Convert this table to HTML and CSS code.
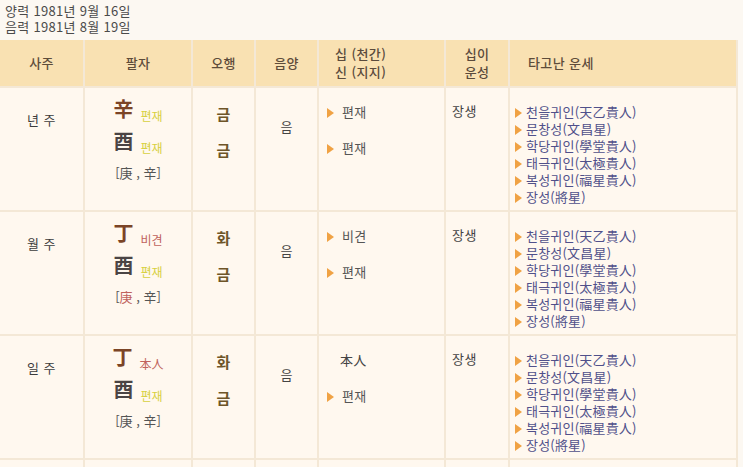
FILE: index.html
```html
<!DOCTYPE html>
<html lang="ko">
<head>
<meta charset="utf-8">
<link rel="stylesheet" href="styles.css">
</head>
<body>
<div class="dates">
  <div>양력 1981년 9월 16일</div>
  <div>음력 1981년 8월 19일</div>
</div>
<div class="saju">
  <div class="th">사주</div>
  <div class="th">팔자</div>
  <div class="th">오행</div>
  <div class="th">음양</div>
  <div class="th th-left th-two"><span>십 (천간)</span><span>신 (지지)</span></div>
  <div class="th th-two"><span>십이</span><span>운성</span></div>
  <div class="th th-left th-wide">타고난 운세</div>

  <!-- 년주 -->
  <div class="td c-name">년 주</div>
  <div class="td c-pal">
    <div class="pal-line"><span class="big red">辛</span><span class="sub yel">편재</span></div>
    <div class="pal-line"><span class="big dark">酉</span><span class="sub yel">편재</span></div>
    <div class="pal-line"><span class="hid">[庚 , 辛]</span></div>
  </div>
  <div class="td c-oh"><div>금</div><div>금</div></div>
  <div class="td c-yy">음</div>
  <div class="td c-sip">
    <div><i class="tri"></i>편재</div>
    <div><i class="tri"></i>편재</div>
  </div>
  <div class="td c-un">장생</div>
  <div class="td c-list">
    <div><i class="tri sm"></i>천을귀인(天乙貴人)</div>
    <div><i class="tri sm"></i>문창성(文昌星)</div>
    <div><i class="tri sm"></i>학당귀인(學堂貴人)</div>
    <div><i class="tri sm"></i>태극귀인(太極貴人)</div>
    <div><i class="tri sm"></i>복성귀인(福星貴人)</div>
    <div><i class="tri sm"></i>장성(將星)</div>
  </div>

  <!-- 월주 -->
  <div class="td c-name">월 주</div>
  <div class="td c-pal">
    <div class="pal-line"><span class="big red">丁</span><span class="sub rose">비견</span></div>
    <div class="pal-line"><span class="big dark">酉</span><span class="sub yel">편재</span></div>
    <div class="pal-line"><span class="hid">[<span class="rose">庚</span> , 辛]</span></div>
  </div>
  <div class="td c-oh"><div>화</div><div>금</div></div>
  <div class="td c-yy">음</div>
  <div class="td c-sip">
    <div><i class="tri"></i>비견</div>
    <div><i class="tri"></i>편재</div>
  </div>
  <div class="td c-un">장생</div>
  <div class="td c-list">
    <div><i class="tri sm"></i>천을귀인(天乙貴人)</div>
    <div><i class="tri sm"></i>문창성(文昌星)</div>
    <div><i class="tri sm"></i>학당귀인(學堂貴人)</div>
    <div><i class="tri sm"></i>태극귀인(太極貴人)</div>
    <div><i class="tri sm"></i>복성귀인(福星貴人)</div>
    <div><i class="tri sm"></i>장성(將星)</div>
  </div>

  <!-- 일주 -->
  <div class="td c-name">일 주</div>
  <div class="td c-pal">
    <div class="pal-line"><span class="big red">丁</span><span class="sub rose">本人</span></div>
    <div class="pal-line"><span class="big dark">酉</span><span class="sub yel">편재</span></div>
    <div class="pal-line"><span class="hid">[庚 , 辛]</span></div>
  </div>
  <div class="td c-oh"><div>화</div><div>금</div></div>
  <div class="td c-yy">음</div>
  <div class="td c-sip">
    <div class="self">本人</div>
    <div><i class="tri"></i>편재</div>
  </div>
  <div class="td c-un">장생</div>
  <div class="td c-list">
    <div><i class="tri sm"></i>천을귀인(天乙貴人)</div>
    <div><i class="tri sm"></i>문창성(文昌星)</div>
    <div><i class="tri sm"></i>학당귀인(學堂貴人)</div>
    <div><i class="tri sm"></i>태극귀인(太極貴人)</div>
    <div><i class="tri sm"></i>복성귀인(福星貴人)</div>
    <div><i class="tri sm"></i>장성(將星)</div>
  </div>

  <!-- 다음 행 -->
  <div class="td"></div>
  <div class="td"></div>
  <div class="td"></div>
  <div class="td"></div>
  <div class="td"></div>
  <div class="td"></div>
  <div class="td"></div>
</div>
</body>
</html>
```

FILE: styles.css
```css
html, body {
  margin: 0;
  padding: 0;
  background: #fcf8f2;
  overflow: hidden;
}
body {
  font-family: "Noto Sans CJK KR", "Noto Sans", sans-serif;
  font-size: 13px;
  color: #444;
}
.dates {
  padding: 3px 0 0 5px;
  line-height: 16px;
  color: #4a4a4a;
  letter-spacing: 0.3px;
}
.saju {
  margin-top: 5px;
  width: 738px;
  display: grid;
  grid-template-columns: 83px 106px 61px 61px 125px 62px 226px;
  grid-template-rows: 46px 122px 122px 122px 122px;
  column-gap: 2px;
  row-gap: 2px;
  background: #f4e8d6;
}
.th {
  background: #f9e1b2;
  color: #5e4c3a;
  font-weight: 500;
  display: flex;
  align-items: center;
  justify-content: center;
  line-height: 18px;
  letter-spacing: 0.4px;
}
.th-two {
  flex-direction: column;
  color: #5a4a3c;
}
.th-left {
  justify-content: flex-start;
  align-items: flex-start;
  padding-left: 16px;
}
.th-two.th-left {
  justify-content: center;
  align-items: flex-start;
}
.th-wide {
  align-items: center;
  padding-left: 18px;
}
.td {
  background: #fff8ef;
}
.c-name {
  padding-top: 23px;
  line-height: 18px;
  text-align: center;
  color: #3c3c3c;
  letter-spacing: 0.5px;
}
.c-pal {
  padding-top: 5px;
  display: flex;
  flex-direction: column;
  align-items: center;
}
.pal-line {
  line-height: 32px;
  height: 32px;
  white-space: nowrap;
}
.big {
  font-size: 20px;
  font-weight: 700;
}
.red { color: #7b4426; }
.dark { color: #4b4444; }
.sub {
  font-size: 12px;
  margin-left: 7px;
  vertical-align: -4px;
}
.yel { color: #d7d03f; }
.rose { color: #c0625c; }
.hid {
  font-size: 13px;
  color: #555;
}
.c-oh {
  padding-top: 8px;
  line-height: 36px;
  text-align: center;
  font-size: 15px;
  font-weight: 700;
  color: #6e5528;
}
.c-yy {
  padding-top: 30px;
  line-height: 18px;
  text-align: center;
  color: #444;
}
.c-sip {
  padding-top: 6px;
  padding-left: 8px;
  line-height: 36px;
  color: #555;
  letter-spacing: 0.3px;
}
.c-sip .self {
  padding-left: 13px;
  color: #444;
}
.tri {
  display: inline-block;
  width: 0;
  height: 0;
  border-left: 7px solid #f0a244;
  border-top: 5px solid transparent;
  border-bottom: 5px solid transparent;
  margin-right: 8px;
  vertical-align: -1px;
}
.tri.sm {
  margin-right: 4px;
}
.c-un {
  padding-top: 14px;
  padding-left: 6px;
  line-height: 18px;
  color: #444;
  letter-spacing: 0.5px;
}
.c-list {
  padding-top: 15px;
  padding-left: 5px;
  line-height: 17px;
  color: #50508a;
  white-space: nowrap;
  letter-spacing: 0.2px;
}
```
